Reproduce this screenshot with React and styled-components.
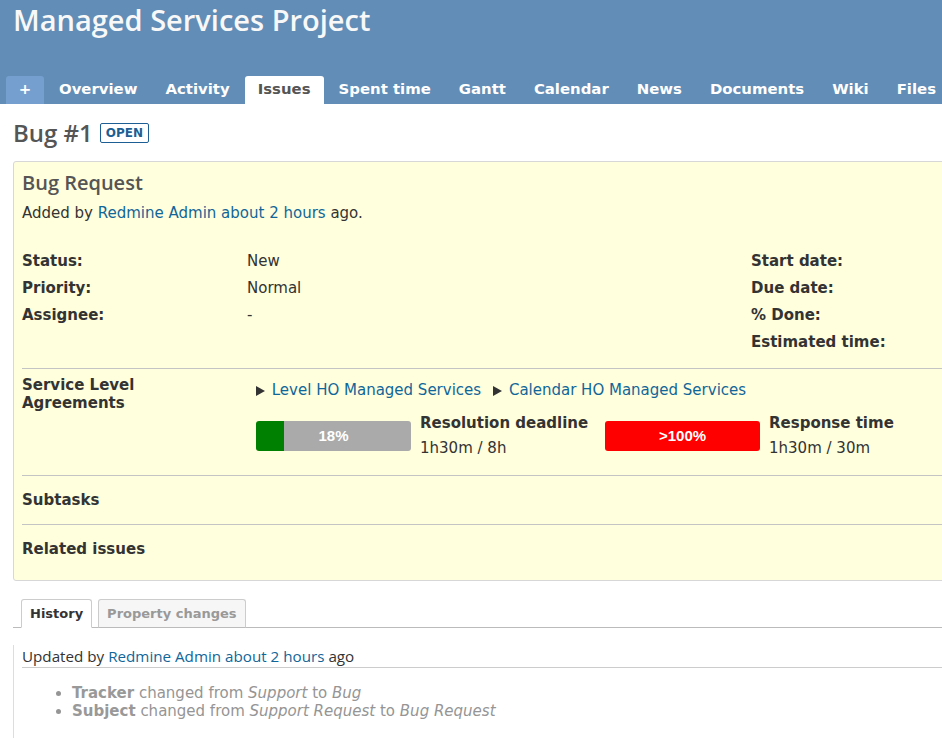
import React from 'react'
import styled, { createGlobalStyle } from 'styled-components'

const GlobalStyle = createGlobalStyle`
  html, body {
    margin: 0;
    overflow: hidden;
    background: #fff;
  }
  body {
    font-family: "DejaVu Sans", Verdana, sans-serif;
    font-size: 15px;
    color: #333;
  }
  a {
    color: #169;
    text-decoration: none;
  }
`

const menu = ['Overview', 'Activity', 'Issues', 'Spent time', 'Gantt', 'Calendar', 'News', 'Documents', 'Wiki', 'Files']

const slas = [
    { pct: 18, label: '18%', color: '#008000', title: 'Resolution deadline', spent: '1h30m / 8h' },
    { pct: 100, label: '>100%', color: '#f00', title: 'Response time', spent: '1h30m / 30m' },
]

const App = () => {
    return (
        <>
            <GlobalStyle />
            <Header>
                <ProjectTitle>Managed Services Project</ProjectTitle>
                <Menu>
                    <MenuItem $new>+</MenuItem>
                    {menu.map((item) => (
                        <MenuItem key={item} $selected={item === 'Issues'}>{item}</MenuItem>
                    ))}
                </Menu>
            </Header>
            <Main>
                <TitleRow>
                    <IssueTitle>Bug #1</IssueTitle>
                    <Badge>open</Badge>
                </TitleRow>
                <IssueBox>
                    <Subject>Bug Request</Subject>
                    <Author>
                        Added by <a href="#">Redmine Admin</a> <a href="#">about 2 hours</a> ago.
                    </Author>
                    <Attributes>
                        <AttrColumn>
                            <Label>Status:</Label><span>New</span>
                            <Label>Priority:</Label><span>Normal</span>
                            <Label>Assignee:</Label><span>-</span>
                        </AttrColumn>
                        <AttrColumn>
                            <Label>Start date:</Label><span></span>
                            <Label>Due date:</Label><span></span>
                            <Label>% Done:</Label><span></span>
                            <Label>Estimated time:</Label><span></span>
                        </AttrColumn>
                    </Attributes>
                    <SlaSection>
                        <SlaLabel>Service Level<br />Agreements</SlaLabel>
                        <div>
                            <SlaLinks>
                                <Arrow /> <a href="#">Level HO Managed Services</a>
                                <Arrow $spaced /> <a href="#">Calendar HO Managed Services</a>
                            </SlaLinks>
                            <SlaItems>
                                {slas.map((s) => (
                                    <SlaItem key={s.title}>
                                        <Bar $pct={s.pct} $color={s.color}>{s.label}</Bar>
                                        <SlaInfo>
                                            <Label>{s.title}</Label>
                                            <div>{s.spent}</div>
                                        </SlaInfo>
                                    </SlaItem>
                                ))}
                            </SlaItems>
                        </div>
                    </SlaSection>
                    <Section><Label>Subtasks</Label></Section>
                    <Section><Label>Related issues</Label></Section>
                </IssueBox>
                <Tabs>
                    <Tab $active>History</Tab>
                    <Tab>Property changes</Tab>
                </Tabs>
                <Journal>
                    <JournalHeader>
                        Updated by <a href="#">Redmine Admin</a> <a href="#">about 2 hours</a> ago
                    </JournalHeader>
                    <Details>
                        <li><strong>Tracker</strong> changed from <i>Support</i> to <i>Bug</i></li>
                        <li><strong>Subject</strong> changed from <i>Support Request</i> to <i>Bug Request</i></li>
                    </Details>
                </Journal>
            </Main>
        </>
    )
}

const Arrow = ({ $spaced }) => (
    <ArrowIcon $spaced={$spaced} viewBox="0 0 9 10" width="9" height="10">
        <path d="M0 0 L9 5 L0 10 Z" fill="#333" />
    </ArrowIcon>
)

const Header = styled.header`
  width: 1100px;
  height: 104px;
  background: #628db6;
  display: flex;
  flex-direction: column;
  justify-content: space-between;
`
const ProjectTitle = styled.h1`
  margin: 0;
  padding: 3px 13px 0;
  font-family: "Open Sans", "Noto Sans", sans-serif;
  font-weight: 600;
  font-size: 29px;
  line-height: 34px;
  color: #f8f8f8;
`
const Menu = styled.ul`
  list-style: none;
  margin: 0;
  padding: 0 0 0 6px;
  display: flex;
  gap: 2px;
  white-space: nowrap;
`
const MenuItem = styled.li`
  height: 28px;
  line-height: 27px;
  padding: ${(p) => (p.$new ? '0' : '0 13px')};
  width: ${(p) => (p.$new ? '38px' : 'auto')};
  text-align: center;
  border-radius: 3px 3px 0 0;
  font-weight: bold;
  font-size: 14.9px;
  background: ${(p) => (p.$selected ? '#fff' : p.$new ? '#759fcf' : 'transparent')};
  color: ${(p) => (p.$selected ? '#555' : '#fff')};
`
const Main = styled.main`
  width: 1100px;
  padding: 0 13px;
`
const TitleRow = styled.div`
  display: flex;
  align-items: center;
  gap: 7px;
  margin-top: 14px;
`
const IssueTitle = styled.h2`
  margin: 0;
  font-family: "Open Sans", "Noto Sans", sans-serif;
  font-weight: 600;
  font-size: 24px;
  line-height: 30px;
  color: #555;
`
const Badge = styled.span`
  border: 1px solid #1d5f94;
  border-radius: 2px;
  color: #1d5f94;
  font-size: 12px;
  font-weight: bold;
  text-transform: uppercase;
  line-height: 18px;
  padding: 0 5px;
`
const IssueBox = styled.div`
  margin-top: 13px;
  background: #ffffdd;
  border: 1px solid #d7d7d7;
  border-radius: 3px;
  padding: 0 0 7px 8px;
`
const Subject = styled.h3`
  margin: 8px 0 0;
  font-family: "Open Sans", "Noto Sans", sans-serif;
  font-weight: 600;
  font-size: 20px;
  line-height: 26px;
  color: #555;
`
const Author = styled.p`
  margin: 7px 0 0;
  line-height: 20px;
`
const Attributes = styled.div`
  display: grid;
  grid-template-columns: 729px 1fr;
  margin: 24px 0 13px;
`
const AttrColumn = styled.div`
  display: grid;
  grid-template-columns: 225px 1fr;
  grid-auto-rows: 27px;
  align-items: center;
  align-content: start;
`
const Label = styled.span`
  font-weight: bold;
`
const Section = styled.div`
  border-top: 1px solid #c4c4c4;
  padding: 14px 0;
  line-height: 20px;
`
const SlaSection = styled(Section)`
  display: grid;
  grid-template-columns: 234px 1fr;
  padding: 7px 0 14px;
`
const SlaLabel = styled.div`
  font-weight: bold;
  line-height: 18px;
`
const SlaLinks = styled.div`
  margin-top: 3px;
  line-height: 22px;
`
const ArrowIcon = styled.svg`
  margin-left: ${(p) => (p.$spaced ? '12px' : '0')};
  margin-right: 2px;
  vertical-align: -1px;
`
const SlaItems = styled.div`
  display: flex;
  margin-top: 10px;
`
const SlaItem = styled.div`
  display: flex;
  align-items: flex-start;
  gap: 9px;
  width: 349px;
`
const Bar = styled.div`
  flex: none;
  width: 155px;
  height: 30px;
  margin-top: 10px;
  border-radius: 3px;
  background: linear-gradient(to right, ${(p) => p.$color} ${(p) => p.$pct}%, #aaa 0);
  color: #fff;
  font-family: "Liberation Sans", Arial, sans-serif;
  font-weight: bold;
  font-size: 15px;
  line-height: 30px;
  text-align: center;
`
const SlaInfo = styled.div`
  line-height: 25px;
`
const Tabs = styled.div`
  display: flex;
  align-items: flex-end;
  gap: 6px;
  margin-top: 18px;
  padding-left: 8px;
  height: 28px;
  border-bottom: 1px solid #bbb;
`
const Tab = styled.div`
  height: 27px;
  line-height: 27px;
  margin-bottom: -1px;
  padding: 0 8px;
  border: 1px solid #ccc;
  border-bottom-color: ${(p) => (p.$active ? '#fff' : '#bbb')};
  border-radius: 3px 3px 0 0;
  background: ${(p) => (p.$active ? '#fff' : '#f6f6f6')};
  color: ${(p) => (p.$active ? '#333' : '#999')};
  font-size: 13px;
  font-weight: bold;
`
const Journal = styled.div`
  margin-top: 17px;
  border-left: 1px solid #ddd;
  padding: 0 0 20px 8px;
`
const JournalHeader = styled.h4`
  margin: 0;
  font-family: "Open Sans", "Noto Sans", sans-serif;
  font-weight: 400;
  font-size: 15.2px;
  line-height: 22px;
  color: #333;
  border-bottom: 1px solid #ccc;
`
const Details = styled.ul`
  margin: 16px 0 0;
  padding-left: 50px;
  line-height: 18px;
  color: #959595;
  strong {
    color: #999;
  }
`

export default App
